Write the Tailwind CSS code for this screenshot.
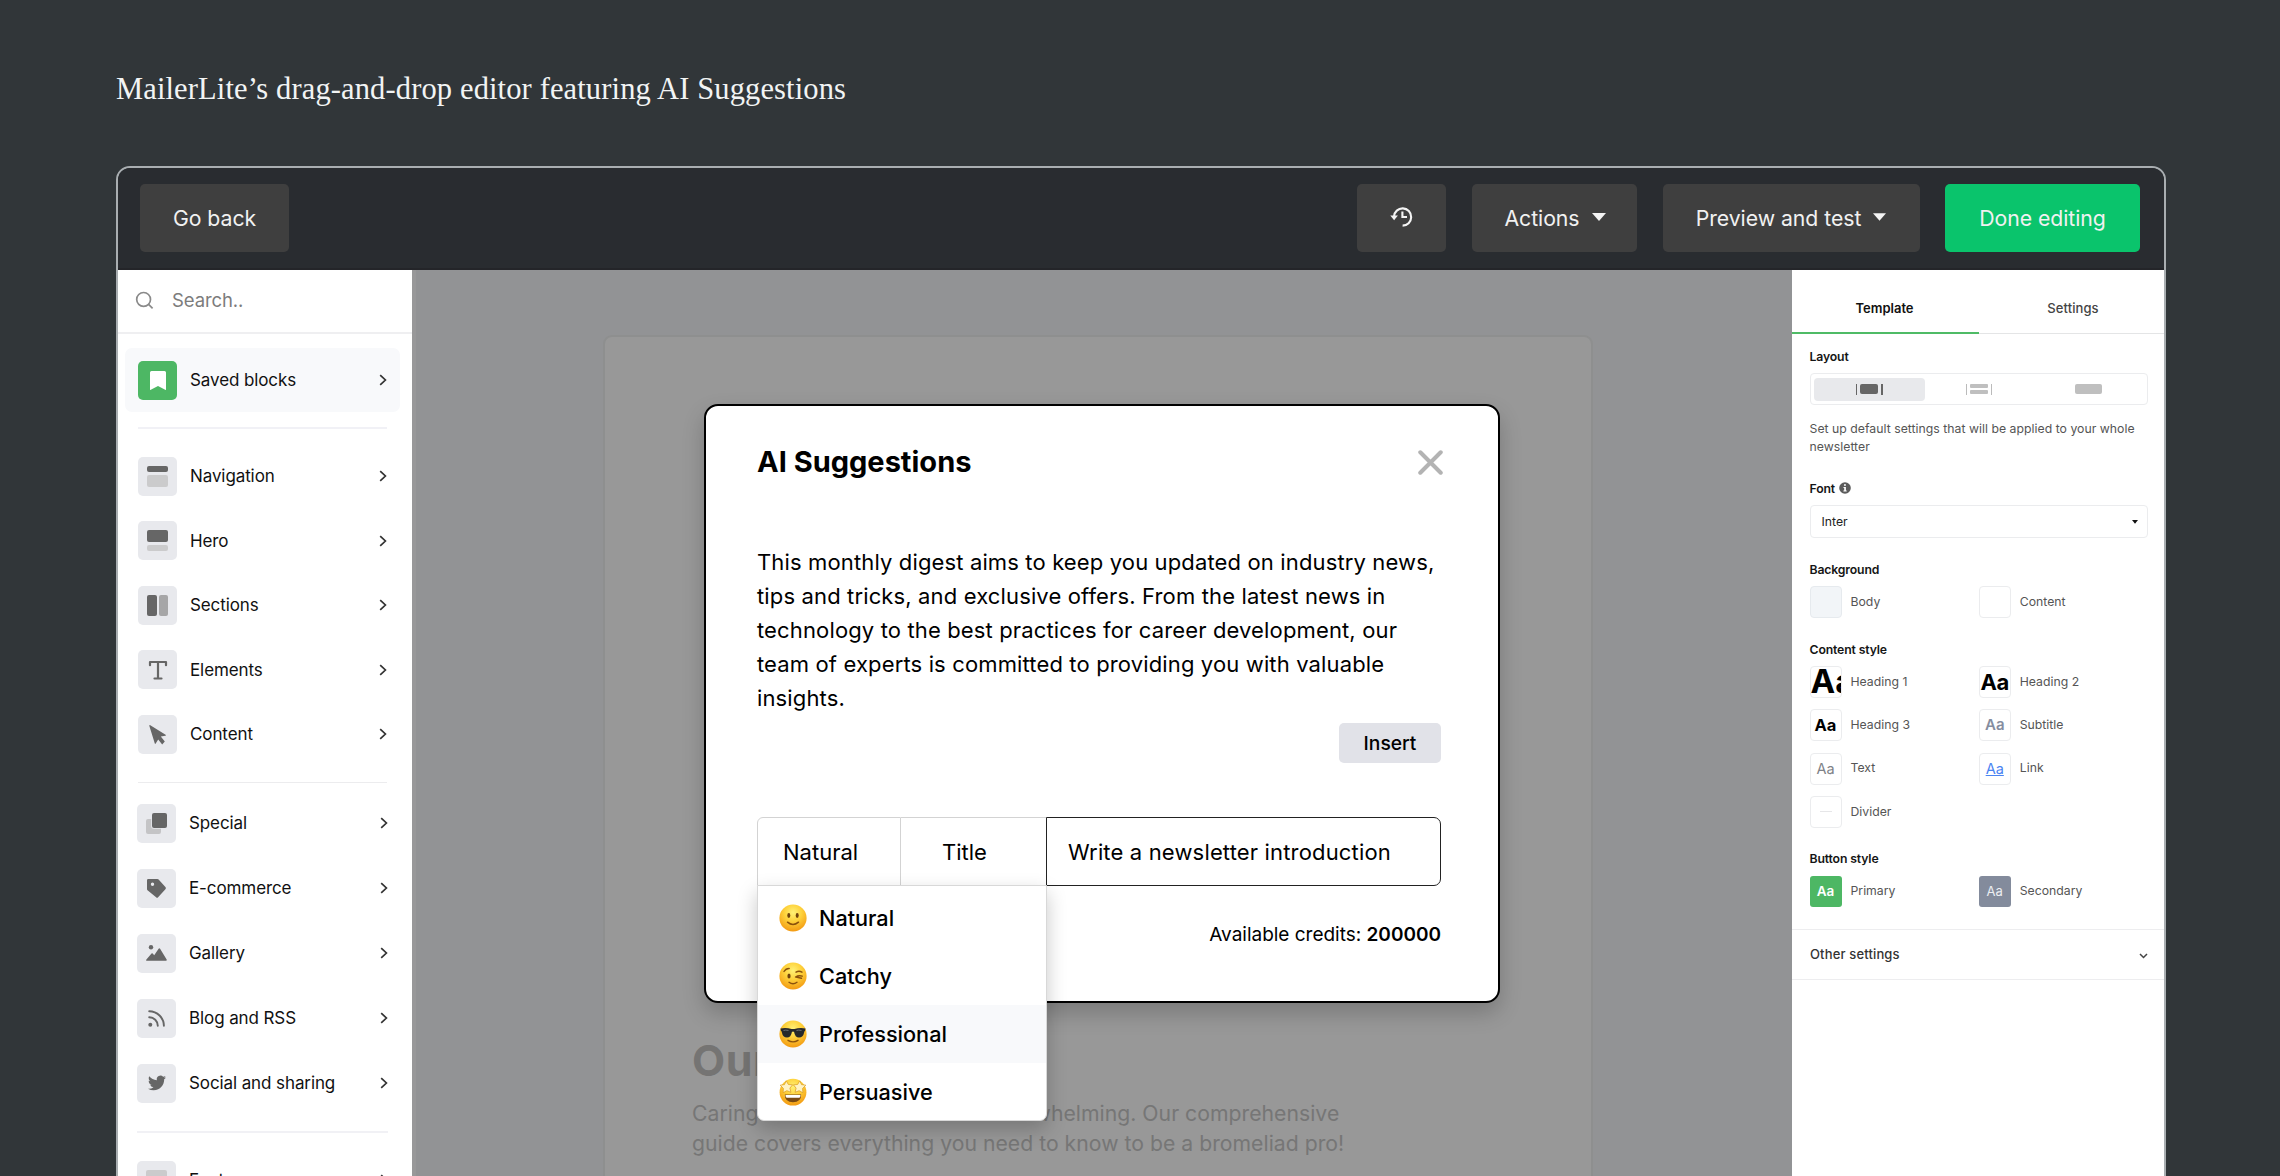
<!DOCTYPE html>
<html lang="en">
<head>
<meta charset="utf-8">
<title>AI Suggestions editor</title>
<script src="https://cdn.jsdelivr.net/npm/@tailwindcss/browser@4"></script>
</head>
<body class="w-[2280px] h-[1176px] overflow-hidden bg-[#313639] font-['Inter',sans-serif]">

<svg class="absolute w-0 h-0">
  <defs>
    <radialGradient id="face" cx=".5" cy=".3" r=".7"><stop offset="0" stop-color="#fff176"/><stop offset=".45" stop-color="#fed23c"/><stop offset="1" stop-color="#f39a12"/></radialGradient>
    <symbol id="chev" viewBox="0 0 8 12"><path d="M1.2 1.2 6.4 6 1.2 10.8" fill="none" stroke="#333" stroke-width="1.7"/></symbol>
  </defs>
</svg>

<div class="h-[166px] pl-[116px] pt-[69px] text-[30.5px] leading-10 tracking-[0.13px] text-[#f2f4f4] font-['Liberation_Serif',serif]">MailerLite’s drag-and-drop editor featuring AI Suggestions</div>

<div class="ml-[116px] w-[2050px] h-[1012px] border-2 border-[#a9aeb1] rounded-t-[14px] overflow-hidden flex flex-col">
  <!-- Top bar -->
  <header class="h-[102px] shrink-0 bg-[#292c30] border-b-2 border-[#242529] flex items-center pl-[22px] pr-6 text-[21.25px] tracking-[-0.05px] text-[#f1f1f1]">
    <div class="w-[149px] h-[68px] rounded-[5px] bg-[#3f3f3f] flex items-center justify-center pt-[2px]">Go back</div>
    <div class="ml-auto w-[89px] h-[68px] rounded-[5px] bg-[#3f3f3f] flex items-center justify-center">
      <svg class="w-6 h-6 -mt-[3px] ml-px" viewBox="0 0 24 24" fill="none" stroke="#f4f4f4" stroke-width="2.1"><path d="M4 11.5A8.6 8.6 0 1 1 12.6 20.6"/><path d="M12.4 6.6v5.4h4.6"/><path d="M.3 10.6h7.6L4.1 15.2z" fill="#f4f4f4" stroke="none"/></svg>
    </div>
    <div class="ml-[26px] w-[165px] h-[68px] rounded-[5px] bg-[#3f3f3f] flex items-center justify-center gap-[12px] pt-[2px] pl-px">Actions<svg class="w-[14px] h-2 -mt-[4px]" viewBox="0 0 14 8"><path d="M0 0h14L7 8z" fill="#f4f4f4"/></svg></div>
    <div class="ml-[26px] w-[257px] h-[68px] rounded-[5px] bg-[#3f3f3f] flex items-center justify-center gap-[12px] pt-[2px] pr-px">Preview and test<svg class="w-[13px] h-2 -mt-[4px]" viewBox="0 0 14 8"><path d="M0 0h14L7 8z" fill="#f4f4f4"/></svg></div>
    <div class="ml-[25px] w-[195px] h-[68px] rounded-[5px] bg-[#0ac46c] flex items-center justify-center pt-[2px]">Done editing</div>
  </header>

  <div class="flex flex-1 min-h-0">
    <!-- Block library -->
    <aside class="w-[294px] shrink-0 bg-white text-[17px] tracking-[-0.1px] text-[#111]">
      <div class="h-16 border-b-2 border-[#efeff1] flex items-center pl-[17px] text-[18.5px] text-[#7c7c7c]">
        <svg class="w-[19px] h-[19px] -mt-[2px]" viewBox="0 0 19 19" fill="none" stroke="#8a8a8a" stroke-width="1.7"><circle cx="8.6" cy="8.4" r="6.9"/><path d="m13.6 13.4 4 4"/></svg>
        <span class="ml-[18px]">Search..</span>
      </div>
      <div class="mt-[14px] ml-[7px] w-[275px] h-16 rounded-[7px] bg-[#f8f9fb] flex items-center pl-[13px] pr-[13px]">
        <div class="w-[39px] h-[39px] rounded-[5px] bg-[#4db764] flex items-center justify-center"><svg class="w-4 h-[19px]" viewBox="0 0 16 19"><path d="M1.5 0h13A1.5 1.5 0 0 1 16 1.5V18.5q0 .8-.8.3L8 15 .8 18.800Q0 19.300 0 18.500V1.500A1.500 1.500 0 0 1 1.500 0z" fill="#fff"/></svg></div>
        <span class="ml-[13px] pt-px">Saved blocks</span>
        <svg class="w-2 h-3 ml-auto"><use href="#chev"/></svg>
      </div>
      <div class="mt-[15px] ml-5 w-[249px] h-0.5 bg-[#f1f1f6]"></div>
      <div class="mt-[15px] pl-5 pr-[25px]">
        <div class="h-[64.5px] flex items-center">
          <div class="w-[39px] h-[39px] rounded-[5px] bg-[#e8e9ed] flex flex-col items-center justify-center gap-[3px]"><i class="w-[21px] h-[6px] rounded-[2px] bg-[#666]"></i><i class="w-[21px] h-[12px] rounded-[2px] bg-[#cbcbcc]"></i></div>
          <span class="ml-[13px] pt-px">Navigation</span><svg class="w-2 h-3 ml-auto"><use href="#chev"/></svg>
        </div>
        <div class="h-[64.5px] flex items-center">
          <div class="w-[39px] h-[39px] rounded-[5px] bg-[#e8e9ed] flex flex-col items-center justify-center gap-[3px]"><i class="w-[21px] h-[12px] rounded-[2px] bg-[#666]"></i><i class="w-[21px] h-[6px] rounded-[2px] bg-[#cbcbcc]"></i></div>
          <span class="ml-[13px] pt-px">Hero</span><svg class="w-2 h-3 ml-auto"><use href="#chev"/></svg>
        </div>
        <div class="h-[64.5px] flex items-center">
          <div class="w-[39px] h-[39px] rounded-[5px] bg-[#e8e9ed] flex items-center justify-center gap-[2px]"><i class="w-[10px] h-[21px] rounded-[2px] bg-[#666]"></i><i class="w-[9px] h-[21px] rounded-[2px] bg-[#a6a6a7]"></i></div>
          <span class="ml-[13px] pt-px">Sections</span><svg class="w-2 h-3 ml-auto"><use href="#chev"/></svg>
        </div>
        <div class="h-[64.5px] flex items-center">
          <div class="w-[39px] h-[39px] rounded-[5px] bg-[#e8e9ed] flex items-center justify-center"><svg class="w-5 h-5" viewBox="0 0 20 20" fill="none" stroke="#666" stroke-width="2.2" stroke-linecap="round" stroke-linejoin="round"><path d="M2 5.200V2h16v3.200M10 2v16.500M6.500 18.500h7"/></svg></div>
          <span class="ml-[13px] pt-px">Elements</span><svg class="w-2 h-3 ml-auto"><use href="#chev"/></svg>
        </div>
        <div class="h-[64.5px] flex items-center">
          <div class="w-[39px] h-[39px] rounded-[5px] bg-[#e8e9ed] flex items-center justify-center"><svg class="w-[18px] h-5 mt-px" viewBox="0 0 18 20"><path d="M1.300.2 16.600 9.800q.8.600-.2.900l-4.600.8 4 5-2.600 2.900-4-5-2.500 4.200q-.6.800-.9-.1L.3.800Q.4-.2 1.300.2z" fill="#666"/></svg></div>
          <span class="ml-[13px] pt-px">Content</span><svg class="w-2 h-3 ml-auto"><use href="#chev"/></svg>
        </div>
      </div>
      <div class="mt-[15px] ml-5 w-[249px] h-px bg-[#ececee]"></div>
      <div class="mt-[8px] pl-[19px] pr-[24px]">
        <div class="h-[65px] flex items-center">
          <div class="w-[39px] h-[39px] rounded-[5px] bg-[#e8e9ed] flex items-center justify-center"><svg class="w-[21px] h-[21px]" viewBox="0 0 21 21"><rect y="6" width="15" height="15" rx="2" fill="#c4c4c6"/><rect x="5.200" y="-.8" width="16.600" height="16.600" rx="2.500" fill="#e8e9ed"/><rect x="6" width="15" height="15" rx="2" fill="#666"/></svg></div>
          <span class="ml-[13px] pt-[2px]">Special</span><svg class="w-2 h-3 ml-auto"><use href="#chev"/></svg>
        </div>
        <div class="h-[65px] flex items-center">
          <div class="w-[39px] h-[39px] rounded-[5px] bg-[#e8e9ed] flex items-center justify-center"><svg class="w-[19px] h-[19px]" viewBox="0 0 19 19"><path fill-rule="evenodd" d="M1.200 0h9.200q.7 0 1.200.5l6.800 7.600q.9 1.100 0 2.200l-7.300 8q-1 1-2 0L.5 11.300Q0 10.800 0 10.100V1.200Q0 0 1.200 0zM5.500 3.500a1.700 1.700 0 1 0 0 3.400 1.700 1.700 0 0 0 0-3.400z" fill="#666"/></svg></div>
          <span class="ml-[13px] pt-[2px]">E-commerce</span><svg class="w-2 h-3 ml-auto"><use href="#chev"/></svg>
        </div>
        <div class="h-[65px] flex items-center">
          <div class="w-[39px] h-[39px] rounded-[5px] bg-[#e8e9ed] flex items-center justify-center"><svg class="w-[21px] h-4" viewBox="0 0 21 16"><circle cx="5" cy="2.300" r="2.200" fill="#666"/><path d="M.2 14.800 5.500 8.600q.7-.6 1.200 0l1.500 1.600 4.400-6.500q.8-.9 1.500 0l6.700 11.100q.2 1-.8 1H.8q-.9 0-.6-1z" fill="#666"/></svg></div>
          <span class="ml-[13px] pt-[2px]">Gallery</span><svg class="w-2 h-3 ml-auto"><use href="#chev"/></svg>
        </div>
        <div class="h-[65px] flex items-center">
          <div class="w-[39px] h-[39px] rounded-[5px] bg-[#e8e9ed] flex items-center justify-center"><svg class="w-[17px] h-[17px]" viewBox="0 0 17 17" fill="none" stroke="#666" stroke-width="1.900" stroke-linecap="round"><circle cx="2.300" cy="14.700" r="2" fill="#666" stroke="none"/><path d="M1.200 7.200a8.600 8.600 0 0 1 8.600 8.600M1.200 1.200a14.700 14.700 0 0 1 14.700 14.600"/></svg></div>
          <span class="ml-[13px] pt-[2px]">Blog and RSS</span><svg class="w-2 h-3 ml-auto"><use href="#chev"/></svg>
        </div>
        <div class="h-[65px] flex items-center">
          <div class="w-[39px] h-[39px] rounded-[5px] bg-[#e8e9ed] flex items-center justify-center"><svg class="w-[18px] h-[18px]" viewBox="0 0 24 24"><path fill="#666" d="M23.950 4.570a10 10 0 0 1-2.820.770 4.960 4.960 0 0 0 2.160-2.720c-.950.550-2 .950-3.130 1.180a4.920 4.920 0 0 0-8.380 4.480C7.690 8.090 4.070 6.130 1.640 3.160a4.820 4.820 0 0 0-.670 2.480c0 1.710.870 3.210 2.190 4.100a4.900 4.900 0 0 1-2.230-.620v.060a4.920 4.920 0 0 0 3.950 4.830 5 5 0 0 1-2.210.080 4.940 4.940 0 0 0 4.600 3.420A9.870 9.870 0 0 1 0 19.540a14 14 0 0 0 7.550 2.210c9.050 0 14-7.500 14-13.980l-.020-.640a9.930 9.930 0 0 0 2.420-2.560z"/></svg></div>
          <span class="ml-[13px] pt-[2px]">Social and sharing</span><svg class="w-2 h-3 ml-auto"><use href="#chev"/></svg>
        </div>
      </div>
      <div class="mt-[15px] ml-[19px] w-[251px] h-0.5 bg-[#f1f1f5]"></div>
      <div class="mt-[15px] pl-[19px] pr-[24px]">
        <div class="h-[65px] flex items-center">
          <div class="w-[39px] h-[39px] rounded-[5px] bg-[#e8e9ed] flex flex-col items-center justify-center gap-[3px]"><i class="w-[21px] h-[12px] rounded-[2px] bg-[#cbcbcc]"></i><i class="w-[21px] h-[6px] rounded-[2px] bg-[#666]"></i></div>
          <span class="ml-[13px] pt-[2px]">Footer</span><svg class="w-2 h-3 ml-auto"><use href="#chev"/></svg>
        </div>
      </div>
    </aside>

    <!-- Dimmed canvas -->
    <main class="flex-1 bg-[#929395] border-l-4 border-[#989899] pt-[65px] pl-[187px]">
      <div class="w-[990px] h-[860px] rounded-[9px] border-2 border-[#8e8f8f] bg-[#989898] pl-[87px] pt-[697px] text-[21.2px] leading-[30px] text-[#767676]">
        <div class="text-[43px] leading-[52px] font-bold tracking-[0.5px] text-[#757473]">Our guide</div>
        <p class="mt-[12px] tracking-[0.02px]">Caring for bromeliads can be overwhelming. Our comprehensive<br>guide covers everything you need to know to be a bromeliad pro!</p>
      </div>
    </main>

    <!-- Template settings -->
    <aside class="w-[372px] shrink-0 bg-white text-[12.25px] text-[#555]">
      <div class="h-16 flex text-[13px] font-medium">
        <div class="w-[187px] pt-[16px] pr-[2px] border-b-2 border-[#4fbb66] flex items-center justify-center font-semibold text-[#111]">Template</div>
        <div class="flex-1 pt-[15px] border-b border-[#e4e5e6] flex items-center justify-center text-[#444] tracking-[0.1px] pl-[3px]">Settings</div>
      </div>
      <div class="pl-[17.5px] pr-[16px]">
        <div class="mt-[14px] h-[18px] leading-[18px] font-semibold text-[#151515] tracking-[-0.15px]">Layout</div>
        <div class="mt-[7px] h-8 border border-[#ebecee] rounded-[4px] flex items-center px-[3px]">
          <div class="w-[111px] h-[23px] rounded-[4px] bg-[#e8e9ec] flex items-center justify-center gap-[3px]"><i class="w-[1.500px] h-[11px] bg-[#666]"></i><i class="w-[18px] h-[10px] rounded-[2px] bg-[#666]"></i><i class="w-[1.500px] h-[11px] bg-[#666]"></i></div>
          <div class="w-[109px] flex items-center justify-center gap-[3px]"><i class="w-px h-[11px] bg-[#bbb]"></i><span class="flex flex-col gap-[2px]"><i class="w-[18px] h-1 rounded-[1px] bg-[#bfbfbf]"></i><i class="w-[18px] h-1 rounded-[1px] bg-[#bfbfbf]"></i></span><i class="w-px h-[11px] bg-[#bbb]"></i></div>
          <div class="flex-1 flex justify-center"><i class="w-[27px] h-[10px] rounded-[2px] bg-[#bfbfbf]"></i></div>
        </div>
        <p class="mt-[15px] leading-[18px] tracking-[0.02px] whitespace-nowrap">Set up default settings that will be applied to your whole<br>newsletter</p>
        <div class="mt-[24px] h-[18px] leading-[18px] font-semibold text-[#151515] tracking-[-0.15px] flex items-center gap-1">Font <svg class="w-3 h-3 -mt-[3px]" viewBox="0 0 12 12"><circle cx="6" cy="6" r="5.800" fill="#5c5c5c"/><path d="M5 2.200h1.900v1.600H5zM4.500 5h2.400v3.500h.8v1H4.400v-1h.8V6h-.7z" fill="#fff"/></svg></div>
        <div class="mt-[7px] h-[33px] border border-[#ebecee] rounded-[4px] flex items-center justify-between pl-[11px] pr-[9px] pt-px text-[#222]">Inter<svg class="w-[6px] h-[4px]" viewBox="0 0 6 4"><path d="M0 0h6L3 3.800z" fill="#111"/></svg></div>
        <div class="mt-[23px] h-[18px] leading-[18px] font-semibold text-[#151515] tracking-[-0.15px]">Background</div>
        <div class="mt-[7px] grid grid-cols-2">
          <div class="flex items-center gap-[9px]"><i class="w-8 h-8 rounded-[4px] border border-[#e6eaee] bg-[#f2f5f8]"></i>Body</div>
          <div class="flex items-center gap-[9px]"><i class="w-8 h-8 rounded-[4px] border border-[#ebecee]"></i>Content</div>
        </div>
        <div class="mt-[23px] h-[18px] leading-[18px] font-semibold text-[#151515] tracking-[-0.15px]">Content style</div>
        <div class="mt-[7px] grid grid-cols-2 gap-y-[11.300px]">
          <div class="flex items-center gap-[9px]"><b class="w-8 h-8 rounded-[4px] border border-[#ebecee] overflow-hidden flex items-center text-[33px] font-bold text-black">Aa</b>Heading 1</div>
          <div class="flex items-center gap-[9px]"><b class="w-8 h-8 rounded-[4px] border border-[#ebecee] flex items-center justify-center text-[22px] tracking-[-0.3px] font-bold text-black">Aa</b>Heading 2</div>
          <div class="flex items-center gap-[9px]"><b class="w-8 h-8 rounded-[4px] border border-[#ebecee] flex items-center justify-center text-[16.500px] font-bold text-black">Aa</b>Heading 3</div>
          <div class="flex items-center gap-[9px]"><b class="w-8 h-8 rounded-[4px] border border-[#ebecee] flex items-center justify-center text-[15px] font-semibold text-[#858da0]">Aa</b>Subtitle</div>
          <div class="flex items-center gap-[9px]"><span class="w-8 h-8 rounded-[4px] border border-[#ebecee] flex items-center justify-center text-[14.500px] text-[#808287]">Aa</span>Text</div>
          <div class="flex items-center gap-[9px]"><span class="w-8 h-8 rounded-[4px] border border-[#ebecee] flex items-center justify-center text-[14.500px] text-[#4b84f2] underline">Aa</span>Link</div>
          <div class="flex items-center gap-[9px]"><span class="w-8 h-8 rounded-[4px] border border-[#ebecee] flex items-center justify-center"><i class="w-3 h-px bg-[#e6e6e8]"></i></span>Divider</div>
        </div>
        <div class="mt-[22px] h-[18px] leading-[18px] font-semibold text-[#151515] tracking-[-0.15px]">Button style</div>
        <div class="mt-[8px] grid grid-cols-2">
          <div class="flex items-center gap-[9px]"><b class="w-8 h-[31px] rounded-[3px] bg-[#4db764] flex items-center justify-center text-[13.500px] font-semibold text-white">Aa</b>Primary</div>
          <div class="flex items-center gap-[9px]"><span class="w-8 h-[31px] rounded-[3px] bg-[#838b9c] flex items-center justify-center text-[13px] text-[#eceef2]">Aa</span>Secondary</div>
        </div>
      </div>
      <div class="mt-[22px] h-[51px] border-y border-[#ededef] flex items-center justify-between pl-[18px] pr-[16px] text-[13px] tracking-[0.15px] font-medium text-[#333]">Other settings<svg class="w-[9px] h-[6px] mt-[3px]" viewBox="0 0 9 6"><path d="M1 1l3.500 3.500L8 1" fill="none" stroke="#444" stroke-width="1.500"/></svg></div>
    </aside>
  </div>
</div>

<!-- AI dialog -->
<div class="absolute left-[704px] top-[404px] w-[796px] h-[599px] bg-white border-2 border-black rounded-[14px] shadow-[0_10px_22px_rgba(0,0,0,0.2)] pl-[51px] pr-[57px] text-black flex flex-col">
  <div class="mt-[36px] h-10 flex items-center justify-between"><h2 class="text-[29px] font-bold leading-10">AI Suggestions</h2>
    <svg class="w-[25px] h-[25px] mr-[-2px]" viewBox="0 0 24 24"><path d="M2.200 2.200l19.600 19.600M21.800 2.200 2.200 21.800" stroke="#b3b3b3" stroke-width="3.900" stroke-linecap="round"/></svg></div>
  <p class="mt-[63px] text-[22px] leading-[34px] tracking-[0.140px] whitespace-nowrap">This monthly digest aims to keep you updated on industry news,<br>tips and tricks, and exclusive offers. From the latest news in<br>technology to the best practices for career development, our<br>team of experts is committed to providing you with valuable<br>insights.</p>
  <div class="mt-[8px] self-end w-[102px] h-10 rounded-[5px] bg-[#e1e2e8] flex items-center justify-center text-[19.250px] font-medium">Insert</div>
  <div class="mt-[54px] w-[684px] h-[69px] flex text-[22px]">
    <div class="w-[144px] border border-[#d3d3d3] rounded-tl-[6px] flex items-center pl-[25px] pt-[2px]">Natural</div>
    <div class="w-[145px] border-y border-[#d3d3d3] flex items-center pl-[41px] pt-[2px]">Title</div>
    <div class="flex-1 border border-[#222] rounded-r-[7px] flex items-center pl-[21px] pt-[2px] tracking-[0.160px]">Write a newsletter introduction</div>
  </div>
  <div class="mt-[35px] self-end text-[19px] leading-7 tracking-[-0.010px]">Available credits: <b class="font-semibold">200000</b></div>
</div>

<!-- Tone menu -->
<div class="absolute left-[757px] top-[885px] w-[290px] h-[236px] bg-white border border-[#d8d8d8] rounded-b-[7px] shadow-[0_8px_20px_rgba(0,0,0,0.22)] text-[21.700px] font-medium text-black tracking-[-0.020px] pt-[3px]">
  <div class="h-[58.100px] pl-[21px] flex items-center gap-[12px]">
    <svg class="w-7 h-7" viewBox="0 0 28 28"><circle cx="14" cy="14" r="13.600" fill="url(#face)"/><ellipse cx="9.800" cy="11.500" rx="1.500" ry="2.400" fill="#70420c"/><ellipse cx="18.200" cy="11.500" rx="1.500" ry="2.400" fill="#70420c"/><path d="M8.500 18.200q5.500 4.600 11 0" fill="none" stroke="#8a510c" stroke-width="1.500" stroke-linecap="round"/></svg>Natural</div>
  <div class="h-[58.100px] pl-[21px] flex items-center gap-[12px]">
    <svg class="w-7 h-7" viewBox="0 0 28 28"><circle cx="14" cy="14" r="13.600" fill="url(#face)"/><ellipse cx="10" cy="14" rx="1.600" ry="2.500" fill="#70420c"/><path d="M5 9.500q2-3.200 5.200-3M17 10.200q3-2 6 0M16.500 15q3.200-2 6.700-.8M17 15l5.500 1.300M10 20.300q4 3 8 0" fill="none" stroke="#8a510c" stroke-width="1.400" stroke-linecap="round"/></svg>Catchy</div>
  <div class="h-[58.100px] pl-[21px] flex items-center gap-[12px] bg-[#f8f9fb]">
    <svg class="w-7 h-7" viewBox="0 0 28 28"><circle cx="14" cy="14" r="13.600" fill="url(#face)"/><path d="M1.500 8.500q6-1 11 .6h3q5-1.600 11-.6l-.4 2.200q-.7.400-.9 1.500-1 5.300-5.200 5.300-4 0-4.900-5.500-1.100-1-2.200 0-.9 5.500-4.900 5.500-4.200 0-5.200-5.300-.2-1.100-.9-1.500z" fill="#26282b"/><path d="M4.500 10.500q2-.8 5 0M17.500 10.500q2-.8 5 0" stroke="#6a6e73" fill="none"/><path d="M9 20.300q5 3.200 10 0" fill="none" stroke="#8a510c" stroke-width="1.400" stroke-linecap="round"/></svg>Professional</div>
  <div class="h-[58.100px] pl-[21px] flex items-center gap-[12px]">
    <svg class="w-7 h-7" viewBox="0 0 28 28"><circle cx="14" cy="14.200" r="13.400" fill="url(#face)"/><path d="M5.800 16.500h16.400q0 7.800-8.200 7.800t-8.200-7.800z" fill="#7a4a12"/><path d="M6.500 17h15q0 2.800-1.200 2.800H7.700Q6.500 19.800 6.500 17z" fill="#fff"/><g fill="#fff3c4" stroke="#d99a1c" stroke-width=".7" stroke-linejoin="round"><path d="M7.200 2.800l2.200 3.700 4.200.3-2.700 3.300 1 4.200-4-1.600-3.800 2 .3-4.300L1.200 7.200l4.300-.6z"/><path d="M20.800 2.800l-2.200 3.700-4.200.3 2.700 3.300-1 4.200 4-1.600 3.800 2-.3-4.300 3.200-3.200-4.300-.6z"/></g></svg>Persuasive</div>
</div>
</body>
</html>
